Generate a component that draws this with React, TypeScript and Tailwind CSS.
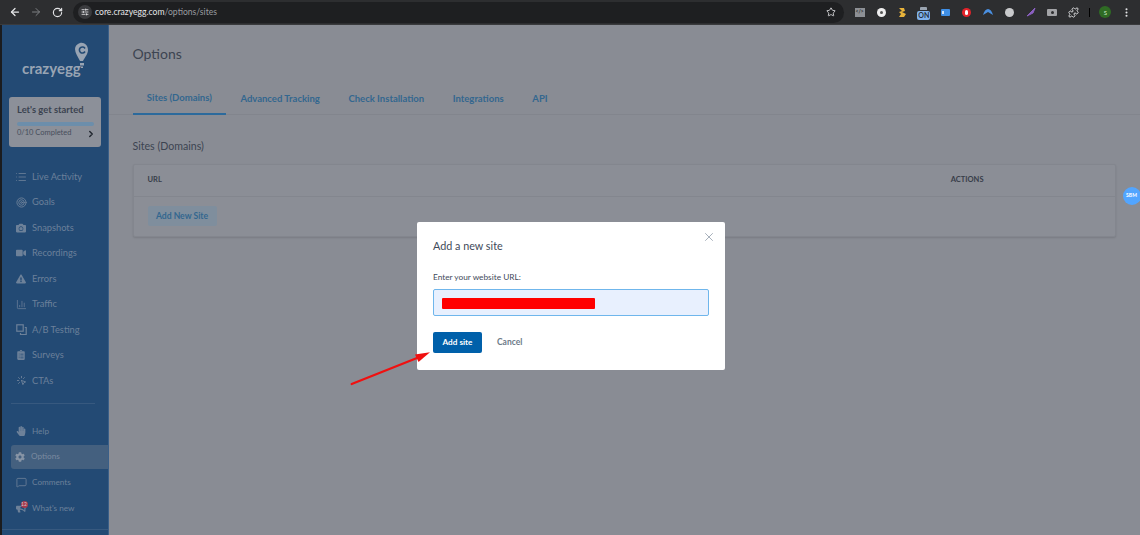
import React from "react";
import { ArrowLeft, ArrowRight, RotateCw, SlidersHorizontal, Star, X, ChevronRight, List, Target, BarChart3, MessageSquare, EllipsisVertical, Puzzle } from "lucide-react";
import { FaCamera, FaVideo, FaExclamationTriangle, FaClipboardList, FaHandPaper, FaCog, FaBullhorn } from "react-icons/fa";
import { TbClick } from "react-icons/tb";

const font = { fontFamily: '"Lato", "Open Sans", sans-serif' };

const AB = (
  <svg width="11" height="11" viewBox="0 0 11 11" fill="none" stroke="currentColor" strokeWidth="1.2">
    <rect x="0.8" y="0.8" width="6.4" height="6.4" />
    <path d="M8.8 3.5h1.4v7H4.5V9" />
  </svg>
);

const nav = [
  { label: "Live Activity", icon: <List size={12} strokeWidth={1.6} /> },
  { label: "Goals", icon: <Target size={11} strokeWidth={2} /> },
  { label: "Snapshots", icon: <FaCamera size={10} /> },
  { label: "Recordings", icon: <FaVideo size={10} /> },
  { label: "Errors", icon: <FaExclamationTriangle size={10} /> },
  { label: "Traffic", icon: <BarChart3 size={11} strokeWidth={1.6} /> },
  { label: "A/B Testing", icon: AB },
  { label: "Surveys", icon: <FaClipboardList size={10} /> },
  { label: "CTAs", icon: <TbClick size={11} /> },
];

function NavItem({ label, icon, size = "text-[9.3px]" }: { label: string; icon: React.ReactNode; size?: string }) {
  return (
    <div className="flex h-[25.5px] items-center pl-[13px]">
      <span className="flex w-[12px] justify-center text-[#6d8199]">{icon}</span>
      <span className={`ml-[5px] whitespace-nowrap text-[#6b809a] ${size}`}>{label}</span>
    </div>
  );
}

function Ext({ children }: { children: React.ReactNode }) {
  return <span className="flex h-[14px] w-[21.4px] shrink-0 items-center justify-center">{children}</span>;
}

function Toolbar() {
  return (
    <div className="flex h-[25px] items-center border-b-[1px] border-[#3a3b3d] bg-[#2d2e30] pl-[9px] text-[#e4e5e7]">
      <ArrowLeft size={12} strokeWidth={2.5} />
      <ArrowRight size={12} strokeWidth={2} className="ml-[9px] text-[#7e8083]" />
      <RotateCw size={11} strokeWidth={2.5} className="ml-[10px]" />
      <div className="ml-[10px] flex h-[21px] w-[771px] shrink-0 items-center rounded-full bg-[#1e1f21] pl-[5px] pr-[8px]">
        <span className="flex h-[14px] w-[14px] items-center justify-center rounded-full bg-[#3a3b3e]">
          <SlidersHorizontal size={8} strokeWidth={2.5} />
        </span>
        <span className="ml-[3px] text-[8.6px] text-[#e4e5e7]">core.crazyegg.com<span className="text-[#9a9ca0]">/options/sites</span></span>
        <Star size={10} strokeWidth={2} className="ml-auto" />
      </div>
      <div className="ml-[5px] flex items-center">
        <Ext><span className="flex h-[9px] w-[10px] items-center justify-center bg-[#8d9095] text-[5px] font-bold text-[#2d2e30]">&lt;/&gt;</span></Ext>
        <Ext><span className="flex h-[9px] w-[9px] items-center justify-center rounded-full bg-[#eee]"><span className="h-[3px] w-[3px] rounded-full bg-[#555]" /></span></Ext>
        <Ext><svg width="10" height="11" viewBox="0 0 10 11"><path d="M2 1h5l1 3-3 1 4 2-2 3H2l2-3-2-2 3-1z" fill="#e8b33a" /></svg></Ext>
        <Ext>
          <span className="relative flex h-[9px] w-[13px] translate-y-[3px] items-center justify-center rounded-[2px] bg-[#7fb2ec] text-[7px] font-bold leading-none text-[#26303d]">
            ON
            <span className="absolute left-[3px] top-[-4px] h-[3px] w-[7px] rounded-t-[1px] bg-[#9aa4b0]" />
          </span>
        </Ext>
        <Ext><span className="flex h-[7px] w-[9px] items-center rounded-[1px] bg-[#3f8fe6]"><span className="ml-[1px] h-[3px] w-[2px] bg-[#cfe3fb]" /></span></Ext>
        <Ext><span className="flex h-[9px] w-[9px] items-center justify-center rounded-full bg-[#e3232a]"><span className="h-[5px] w-[3px] rounded-sm bg-white" /></span></Ext>
        <Ext><svg width="12" height="8" viewBox="0 0 12 8"><path d="M1 7C2 3 4 1 6 1s4 2 5 6L6 4z" fill="#4a8fe0" /></svg></Ext>
        <Ext><span className="h-[9px] w-[9px] rounded-full bg-[#c9cacc]" /></Ext>
        <Ext><svg width="10" height="10" viewBox="0 0 10 10"><path d="M1 9 9 1 7 6z" fill="#8a5fc0" stroke="#8a5fc0" /></svg></Ext>
        <Ext><span className="flex h-[7px] w-[10px] items-center justify-center rounded-[1px] bg-[#a3a4a7]"><span className="h-[3px] w-[3px] rounded-full bg-[#2d2e30]" /></span></Ext>
        <Ext><Puzzle size={11} strokeWidth={2} /></Ext>
        <span className="ml-[5px] h-[9px] w-px bg-black" />
        <span className="ml-[9px] flex h-[12px] w-[12px] items-center justify-center rounded-full bg-[#2f6b24] text-[6px] text-[#cfe8c8]">S</span>
        <EllipsisVertical size={11} strokeWidth={2.5} className="ml-[10px]" />
      </div>
    </div>
  );
}

function Sidebar() {
  return (
    <aside className="flex w-[106.5px] shrink-0 flex-col overflow-hidden border-r border-[#3a5f88] bg-[#234a74]">
      <div className="relative mt-[16px] h-[40px]">
        <svg width="16" height="27" viewBox="0 0 16 27" className="absolute left-[72px] top-[1px]">
          <path d="M6 1c4-1 8 2 8 7 0 4-3 7-5 11H6C4 15 1 11 1 7c0-3 2-5 5-6z" fill="#98a4b3" />
          <path d="M11 6.5a3 3 0 1 0 0 3" fill="none" stroke="#234a74" strokeWidth="1.6" />
          <rect x="6" y="21" width="4" height="2.5" fill="#98a4b3" />
          <rect x="7" y="24.5" width="2" height="1.5" fill="#98a4b3" />
        </svg>
        <span className="absolute left-[20px] top-[17px] text-[15px] font-bold leading-[20px] text-[#98a4b3]">crazyegg</span>
      </div>
      <div className="ml-[7px] mt-[16px] h-[50px] w-[92px] rounded-[3px] bg-[#8c9099] px-[8px] pt-[7px]">
        <div className="whitespace-nowrap text-[9.4px] font-bold leading-[12px] text-[#3b4350]">Let's get started</div>
        <div className="mt-[5.5px] h-[4.5px] w-[77px] rounded-full bg-[#6c8eab]" />
        <div className="relative mt-[1px] flex items-center justify-between whitespace-nowrap text-[7.5px] leading-[12px] text-[#474e5b]">
          <span>0/10 Completed</span>
          <ChevronRight size={10} strokeWidth={3.5} className="-mr-[3px] mt-[2px] text-[#222831]" />
        </div>
      </div>
      <div className="mt-[17px]">
        {nav.map((n) => <NavItem key={n.label} {...n} />)}
      </div>
      <div className="ml-[9px] mt-[9.5px] h-px w-[84px] bg-[#37597f]" />
      <div className="mt-[14px]">
        <NavItem label="Help" icon={<FaHandPaper size={10} />} size="text-[8.2px]" />
        <div className="ml-[9px] mt-[1px] flex h-[24px] items-center rounded-l-[3px] bg-[#44607f] pl-[4px]">
          <FaCog size={10} className="text-[#8794a5]" />
          <span className="ml-[6px] text-[8.2px] text-[#7b8a9f]">Options</span>
        </div>
        <div className="mt-[1px]">
          <NavItem label="Comments" icon={<MessageSquare size={11} strokeWidth={1.8} />} size="text-[8.2px]" />
        </div>
        <div className="relative">
          <NavItem label="What's new" icon={<FaBullhorn size={10} />} size="text-[8.2px]" />
          <span className="absolute left-[18.5px] top-[6px] flex h-[7px] w-[7px] items-center justify-center rounded-full bg-[#a63a4e] text-[5px] leading-none text-[#d5c7cb]">12</span>
        </div>
      </div>
      <div className="mt-[8px] h-px w-full bg-[#37597f]" />
    </aside>
  );
}

function Main() {
  const tabs = ["Sites (Domains)", "Advanced Tracking", "Check Installation", "Integrations", "API"];
  return (
    <main className="relative min-w-0 flex-1 bg-[#898c94]">
      <h1 className="pl-[24px] pt-[19px] text-[14px] leading-[19px] text-[#3c4451]">Options</h1>
      <div className="mt-[17px] flex h-[35px] border-b border-[#82858d] pl-[24px]">
        {tabs.map((t, i) => (
          <div key={t} className={`flex h-[35px] items-center whitespace-nowrap px-[14.3px] pt-[3px] text-[9.5px] font-bold text-[#33678f] ${i === 0 ? "border-b-[2px] border-[#2c6a9c]" : ""}`}>{t}</div>
        ))}
      </div>
      <h2 className="pl-[24px] pt-[24px] text-[10.6px] leading-[14px] text-[#3c4451]">Sites (Domains)</h2>
      <section className="ml-[24px] mt-[11px] h-[73px] w-[983px] rounded-[2px] border border-[#83868e] bg-[#8b8e96] shadow-[0_1px_2px_rgba(0,0,0,0.12)]">
        <div className="flex h-[32px] items-center justify-between border-b border-[#83868e] pb-[2px] pl-[14px] text-[7.5px] font-bold text-[#373d49]">
          <span>URL</span>
          <span className="mr-[131px]">ACTIONS</span>
        </div>
        <div className="pl-[14px] pt-[9px]">
          <button className="flex h-[20px] w-[69px] items-center justify-center rounded-[2px] bg-[#7f8e9d] text-[8.6px] font-bold text-[#33678f]">Add New Site</button>
        </div>
      </section>
      <span className="absolute left-[1014px] top-[162px] flex h-[18px] w-[18px] items-center justify-center rounded-full bg-[#52a5ff] text-[5px] font-bold text-white">SBM</span>
    </main>
  );
}

function Modal() {
  return (
    <div className="absolute left-[417px] top-[222px] h-[148px] w-[308px] rounded-[2px] bg-white px-[16px] pt-[16px]">
      <X size={14} strokeWidth={1.5} className="absolute right-[9px] top-[8px] text-[#9aa5b1]" />
      <div className="text-[10.8px] leading-[15px] text-[#3f4a5a]">Add a new site</div>
      <div className="mt-[18px] text-[8.3px] leading-[12px] text-[#3f4a5a]">Enter your website URL:</div>
      <div className="mt-[6px] flex h-[27px] w-[276px] items-center rounded-[2px] border border-[#6fb6ec] bg-[#e8f0fe] pl-[8px]">
        <div className="mt-[1px] h-[11px] w-[153px] rounded-[1px] bg-[#ff0000]" />
      </div>
      <div className="mt-[16px] flex items-center">
        <button className="h-[21px] w-[49px] rounded-[2px] bg-[#0060aa] text-[8.2px] font-bold text-white">Add site</button>
        <span className="ml-[15px] text-[8.5px] font-bold text-[#6d7a88]">Cancel</span>
      </div>
    </div>
  );
}

export default function App() {
  return (
    <div className="relative flex h-[535px] w-[1140px] flex-col overflow-hidden bg-[#1b1c1e]" style={font}>
      <Toolbar />
      <div className="flex min-h-0 flex-1 pl-[2px]">
        <Sidebar />
        <Main />
      </div>
      <Modal />
      <svg width="100" height="50" viewBox="0 0 100 50" className="absolute left-[345px] top-[345px]">
        <path d="M6.7 39 72 13" stroke="#f01010" strokeWidth="2.2" strokeLinecap="round" />
        <path d="M85 7.3 70 9.5 73.5 17z" fill="#f01010" />
      </svg>
    </div>
  );
}
